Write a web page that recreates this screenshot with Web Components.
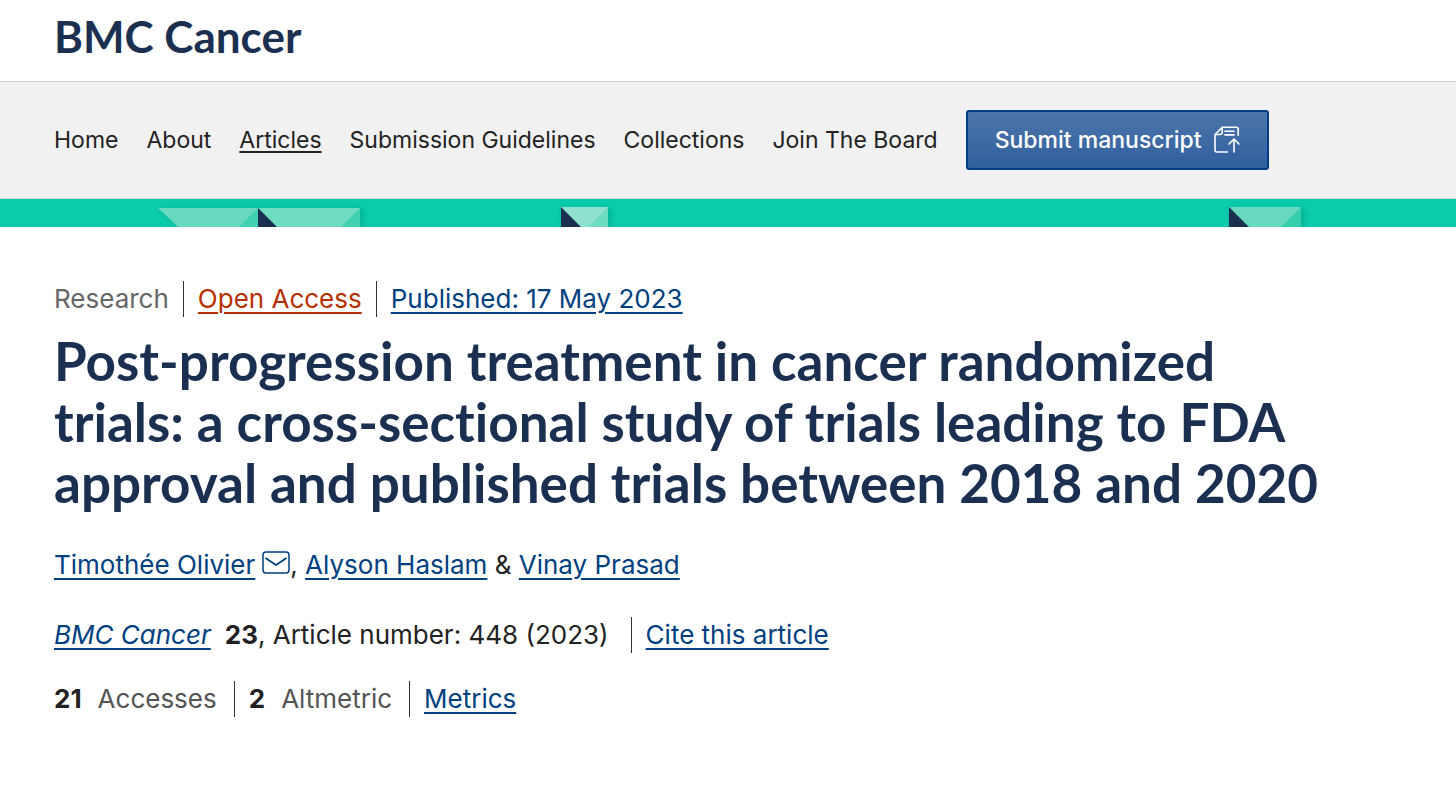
<!DOCTYPE html>
<html lang="en">
<head>
<meta charset="utf-8">
<meta name="viewport" content="width=device-width, initial-scale=1">
<title>BMC Cancer</title>
<style>
  body { margin: 0; background: #fff; color: #222; font-family: Inter, "Liberation Sans", sans-serif; }
</style>
</head>
<body>
<article-page></article-page>

<template id="page-header">
  <style>
    :host { display: block; padding: 8px 54px 16px; border-bottom: 1px solid #ccc; }
    a { color: #1b3051; font: 700 44px/57px Lato, "Open Sans", sans-serif; text-decoration: none; }
    div { display: flex; }
  </style>
  <div><a href="#"><slot></slot></a></div>
</template>

<template id="journal-nav">
  <style>
    :host { display: block; background: #f1f1f1; border-bottom: 1px solid #d5d5d5; padding: 28px 54px; }
    nav { display: flex; flex-wrap: wrap; align-items: center; gap: 28px; }
  </style>
  <nav aria-label="Journal"><slot></slot></nav>
</template>

<template id="nav-link">
  <style>
    :host { display: block; }
    a { color: #222; font-size: 23px; line-height: 32px; text-decoration: none; white-space: nowrap; }
    :host([current]) a { text-decoration: underline; text-decoration-thickness: 2px; text-underline-offset: 3px; text-decoration-skip-ink: none; }
  </style>
  <a href="#"><slot></slot></a>
</template>

<template id="submit-button">
  <style>
    :host { display: block; }
    button {
      display: flex; align-items: center; gap: 12px; box-sizing: border-box; height: 60px; padding: 0 27px;
      border: 2px solid #003d86; border-radius: 3px; color: #fff; white-space: nowrap;
      background: linear-gradient(#4d76a9, #305f9f); font: 500 23px/32px Inter, "Liberation Sans", sans-serif;
    }
    svg { display: block; width: 26px; height: 28px; }
  </style>
  <button type="button"><slot></slot>
    <svg viewBox="0 0 26 28" fill="none" stroke="#fff" stroke-width="1.6" stroke-linecap="round" stroke-linejoin="round" aria-hidden="true">
      <path d="M13.5 26H3.3Q1 26 1 23.7V8.5L8.3 1.2H22.3Q24.2 1.2 24.2 3.2V9.3M1.2 8.500H6Q8.2 8.500 8.2 6.3V1.4M11 5.2H20M11 8.9H20M20 26V13.2M15 18L20 13L25 18"/>
    </svg>
  </button>
</template>

<template id="pattern-band">
  <style>
    :host { display: block; height: 28px; overflow: hidden; background: #0acbaa; }
    svg { display: block; width: 100%; height: 28px; }
  </style>
  <svg viewBox="0 0 1456 28" preserveAspectRatio="none" aria-hidden="true">
    <defs>
      <filter id="soft" x="-20%" y="-50%" width="140%" height="200%"><feGaussianBlur stdDeviation="3"/></filter>
    </defs>
    <g fill="#058f78" opacity=".45" filter="url(#soft)">
      <path d="M160 10H363V40H190Z"/><path d="M563 10H611V40H563Z"/><path d="M1231 10H1304V40H1231Z"/>
    </g>
    <path fill="#67dabf" d="M158 9H258V28H178Z"/>
    <path fill="#3fd1b1" d="M258 9V28H239Z"/>
    <path fill="#70dcc2" d="M258 9H360V28H258Z"/>
    <path fill="#3fd1b1" d="M360 9V28H341Z"/>
    <path fill="#1b3051" d="M258 9L277 28H258Z"/>
    <path fill="#8fe3ce" d="M561 8H608V28H561Z"/>
    <path fill="#6edcc1" d="M608 8V28H588Z"/>
    <path fill="#1b3051" d="M561 8L581 28H561Z"/>
    <path fill="#67dabf" d="M1229 8H1301V28H1229Z"/>
    <path fill="#35cfae" d="M1301 8V28H1281Z"/>
    <path fill="#1b3051" d="M1229 8L1249 28H1229Z"/>
  </svg>
</template>

<template id="meta-row">
  <style>
    :host { display: flex; flex-wrap: wrap; align-items: center; font-size: 26px; line-height: 36px; color: #222; }
    ::slotted(*) { padding-right: var(--meta-gap, 14px); }
    ::slotted(:not(:first-child)) { border-left: 1px solid #333; padding-left: 14px; }
    ::slotted([muted]) { color: #666; }
    ::slotted([wide]) { padding-right: 22px; }
  </style>
  <slot></slot>
</template>

<template id="text-link">
  <style>
    :host { display: inline; }
    a { color: #004080; text-decoration: underline; text-decoration-thickness: 2px; text-underline-offset: 4px; }
    :host([accent]) a { color: #b93000; }
  </style><a href="#"><slot></slot></a></template>

<template id="stat-item">
  <style>
    :host { display: block; color: #555; }
    b { color: #222; margin-right: 16px; }
  </style>
  <b><slot name="count"></slot></b><slot></slot>
</template>

<template id="mail-icon">
  <style>
    :host { display: inline-block; margin-left: 7px; }
    svg { display: block; width: 28px; height: 23px; }
  </style>
  <svg viewBox="0 0 28 23" fill="none" stroke="#004080" stroke-width="1.5" stroke-linejoin="round" aria-hidden="true">
    <rect x="1" y="1" width="26" height="21" rx="3"/><path d="M3.5 7L14 14L24.5 7" stroke-width="1.8"/>
  </svg>
</template>

<template id="article-header">
  <style>
    :host { display: block; padding: 54px 54px 66px; }
    h1 { margin: 13px 0 0; max-width: 1300px; color: #1b3051; font: 700 53px/61px Lato, "Open Sans", sans-serif; font-variant-ligatures: none; }
    .authors { margin: 34px 0 0; font-size: 26px; line-height: 36px; }
    .citation { margin-top: 34px; }
    .stats { margin-top: 28px; --meta-gap: 17px; }
    i { margin-right: 14px; }
  </style>
  <meta-row><span muted>Research</span><span><text-link accent>Open Access</text-link></span><span><text-link>Published: 17 May 2023</text-link></span></meta-row>
  <h1>Post-progression treatment in cancer randomized trials: a cross-sectional study of trials leading to FDA approval and published trials between 2018 and 2020</h1>
  <p class="authors"><text-link>Timothée Olivier</text-link><mail-icon></mail-icon>, <text-link>Alyson Haslam</text-link> &amp; <text-link>Vinay Prasad</text-link></p>
  <meta-row class="citation"><span wide><i><text-link>BMC Cancer</text-link></i><b>23</b>, Article number: 448 (2023)</span><span><text-link>Cite this article</text-link></span></meta-row>
  <meta-row class="stats"><stat-item><span slot="count">21</span>Accesses</stat-item><stat-item><span slot="count">2</span>Altmetric</stat-item><span><text-link>Metrics</text-link></span></meta-row>
</template>

<template id="article-page">
  <style>:host, header, main { display: block; }</style>
  <header>
    <page-header>BMC Cancer</page-header>
    <journal-nav>
      <nav-link>Home</nav-link><nav-link>About</nav-link><nav-link current>Articles</nav-link><nav-link>Submission Guidelines</nav-link><nav-link>Collections</nav-link><nav-link>Join The Board</nav-link>
      <submit-button>Submit manuscript</submit-button>
    </journal-nav>
    <pattern-band></pattern-band>
  </header>
  <main><article-header></article-header></main>
</template>

<script>
class TemplateElement extends HTMLElement {
  constructor() {
    super();
    const template = document.getElementById(this.localName);
    this.attachShadow({ mode: "open" }).append(template.content.cloneNode(true));
  }
}
for (const name of ["page-header", "nav-link", "submit-button", "journal-nav", "pattern-band", "text-link", "stat-item", "mail-icon", "meta-row", "article-header", "article-page"]) {
  customElements.define(name, class extends TemplateElement {});
}
</script>
</body>
</html>
